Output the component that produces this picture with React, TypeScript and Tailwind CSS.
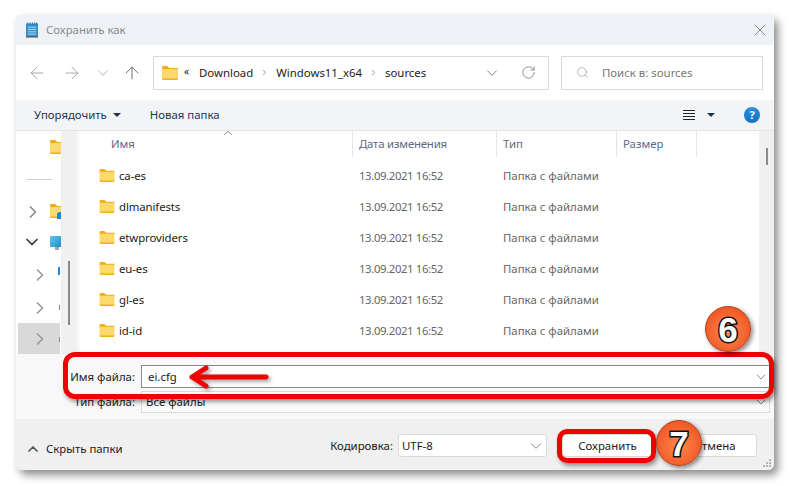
import { ArrowLeft, ArrowRight, ArrowUp, ChevronDown, ChevronRight, ChevronUp, RotateCw, Search, X } from 'lucide-react';

const rows = ['ca-es', 'dlmanifests', 'etwproviders', 'eu-es', 'gl-es', 'id-id'];

function Folder({ className = '' }: { className?: string }) {
  return (
    <svg viewBox="0 0 16 14" className={className}>
      <path d="M0 1.5C0 .7.6 0 1.4 0h3.4c.5 0 .8.2 1.1.5L7.2 2H16v2H0z" fill="#f0ae14" />
      <path d="M0 3h16v9.6c0 .8-.6 1.4-1.4 1.4H1.4C.6 14 0 13.4 0 12.6z" fill="#fbd96b" />
      <path d="M0 12.4h16v.3c0 .7-.6 1.3-1.4 1.3H1.4C.6 14 0 13.4 0 12.7z" fill="#eeb11f" />
    </svg>
  );
}

function Caret() {
  return <span className="block w-0 h-0 border-x-[4px] border-x-transparent border-t-[4px] border-t-[#1c3557]" />;
}

function Badge({ n, className }: { n: string; className: string }) {
  return (
    <div className={`absolute w-[46px] h-[46px] rounded-full border border-[#a8401c] flex items-center justify-center bg-[radial-gradient(circle_at_50%_55%,#ff8a50,#f4602c_60%,#e0481a)] shadow-[2px_2px_4px_rgba(0,0,0,0.45)] ${className}`}>
      <span className="font-['Liberation_Sans',sans-serif] font-bold text-[35px] leading-none text-white [-webkit-text-stroke:3px_#111] [paint-order:stroke_fill]">{n}</span>
    </div>
  );
}

export default function App() {
  return (
    <div className="relative w-[790px] h-[486px] bg-white overflow-hidden font-['Noto_Sans',sans-serif] text-[11.4px] text-[#1a1a1a] p-[15px_16px_16px_16px]">
      <div className="w-[758px] h-[455px] rounded-t-[4px] rounded-b-[6px] bg-white flex flex-col overflow-hidden shadow-[4px_5px_9px_rgba(0,0,0,0.45)]">
        {/* title */}
        <div className="h-[30px] shrink-0 bg-[#eef2f6] flex items-center pl-[10px] pr-[4px]">
          <svg viewBox="0 0 13 16" className="w-[12px] h-[16px] mr-[8px]">
            <rect x="0" y="1" width="13" height="15" fill="#2f8fcf" />
            <rect x="0" y="15" width="13" height="1" fill="#8a4b20" />
            <path d="M2 0v2M4.500 0v2M7 0v2M9.500 0v2M11.500 0v2" stroke="#1c6aa5" />
            <path d="M2 5h9M2 7.500h9M2 10h9M2 12.500h9" stroke="#bfe3f7" />
          </svg>
          <span className="text-[#8a8a8a]">Сохранить как</span>
          <X className="ml-auto w-[20px] h-[20px] text-[#8c8c8c]" strokeWidth={1.2} />
        </div>

        {/* address */}
        <div className="h-[55px] shrink-0 bg-white flex items-center pl-[11px]">
          <ArrowLeft className="w-[20px] h-[20px] text-[#a8a8a8]" strokeWidth={1.2} />
          <ArrowRight className="w-[20px] h-[20px] text-[#a8a8a8] ml-[15px]" strokeWidth={1.2} />
          <ChevronDown className="w-[18px] h-[18px] text-[#a8a8a8] ml-[12px]" strokeWidth={1.2} />
          <ArrowUp className="w-[20px] h-[20px] text-[#707070] ml-[10px]" strokeWidth={1.2} />
          <div className="ml-[11px] w-[396px] h-[34px] border border-[#d9d9d9] flex items-center pl-[8px] pr-[12px]">
            <Folder className="w-[16px] h-[14px] shrink-0" />
            <span className="ml-[6px] w-[8px] text-[10px] leading-none mb-[3px]">«</span>
            <span className="ml-[7px]">Download</span>
            <ChevronRight className="w-[9px] h-[9px] text-[#777] mx-[7px]" strokeWidth={2} />
            <span>Windows11_x64</span>
            <ChevronRight className="w-[9px] h-[9px] text-[#777] mx-[7px]" strokeWidth={2} />
            <span>sources</span>
            <ChevronDown className="ml-auto w-[18px] h-[18px] text-[#777]" strokeWidth={1.2} />
            <RotateCw className="ml-[20px] w-[15px] h-[15px] text-[#777]" strokeWidth={1.3} />
          </div>
          <div className="ml-[12px] w-[202px] h-[34px] border border-[#d9d9d9] flex items-center pl-[14px] text-[#767676]">
            <Search className="w-[13px] h-[13px] text-[#999]" strokeWidth={1.3} />
            <span className="ml-[13px]">Поиск в: sources</span>
          </div>
        </div>

        {/* toolbar */}
        <div className="h-[31px] shrink-0 bg-[#f3f4f6] border-b border-[#e3e3e3] flex items-center pl-[18px] pr-[14px] text-[#1c3557]">
          <span>Упорядочить</span>
          <span className="ml-[6px]"><Caret /></span>
          <span className="ml-[29px]">Новая папка</span>
          <div className="ml-auto w-[12px] flex flex-col gap-[2px]">
            <span className="h-px bg-[#222]" />
            <span className="h-px bg-[#222]" />
            <span className="h-px bg-[#222]" />
            <span className="h-px bg-[#222]" />
          </div>
          <span className="ml-[12px]"><Caret /></span>
          <span className="ml-[29px] w-[16px] h-[16px] rounded-full bg-[linear-gradient(#2a90e0,#1270c0)] text-white text-[11px] font-bold flex items-center justify-center">?</span>
        </div>

        {/* browser */}
        <div className="h-[223px] shrink-0 flex bg-[#f8f8f8]">
          <div className="w-[45px] shrink-0 bg-white relative overflow-hidden">
            <Folder className="absolute left-[34px] top-[9px] w-[16px] h-[14px]" />
            <div className="absolute left-[10px] top-[48px] w-[26px] h-px bg-[#d0d0d0]" />
            <ChevronRight className="absolute left-[7px] top-[71px] w-[20px] h-[20px] text-[#8a8a8a]" strokeWidth={2} />
            <Folder className="absolute left-[34px] top-[73px] w-[16px] h-[14px]" />
            <div className="absolute left-[41px] top-[81px] w-[4px] h-[7px] rounded-tl-[3px] bg-[#1a86d8]" />
            <ChevronDown className="absolute left-[6px] top-[101px] w-[20px] h-[20px] text-[#333]" strokeWidth={2} />
            <div className="absolute left-[34px] top-[105px] w-[14px] h-[11px] bg-[linear-gradient(135deg,#5cc8ee,#1a86c8)]" />
            <div className="absolute left-[39px] top-[116px] w-[4px] h-[3px] bg-[#9aa8b0]" />
            <ChevronRight className="absolute left-[14px] top-[134px] w-[20px] h-[20px] text-[#9a9a9a]" strokeWidth={2} />
            <div className="absolute left-[42px] top-[136px] w-[2px] h-[8px] bg-[#2b88d8]" />
            <ChevronRight className="absolute left-[14px] top-[167px] w-[20px] h-[20px] text-[#9a9a9a]" strokeWidth={2} />
            <div className="absolute left-[43px] top-[174px] w-px h-[5px] bg-[#888]" />
            <div className="absolute left-[2px] top-[192px] w-[42px] h-[31px] bg-[#d9d9d9]" />
            <ChevronRight className="absolute left-[14px] top-[198px] w-[20px] h-[20px] text-[#9a9a9a]" strokeWidth={2} />
            <div className="absolute left-[43px] top-[206px] w-px h-[5px] bg-[#888]" />
          </div>
          <div className="w-[16px] shrink-0 bg-[#f0f0f0] relative">
            <div className="absolute left-[7px] top-[130px] w-[2px] h-[64px] bg-[#8a8a8a]" />
          </div>
          <div className="w-[3px] shrink-0 bg-[#f8f8f8]" />
          <div className="flex-1 bg-white">
            <div className="h-[26px] flex items-center text-[#5a6a80]">
              <div className="w-[273px] h-full pl-[31px] flex items-center border-r border-[#e5e5e5] relative">
                Имя
                <ChevronUp className="absolute left-[141px] -top-[5px] w-[14px] h-[14px] text-[#777]" strokeWidth={1.5} />
              </div>
              <div className="w-[144px] h-full pl-[6px] flex items-center border-r border-[#e5e5e5] tracking-[-0.2px]">Дата изменения</div>
              <div className="w-[120px] h-full pl-[6px] flex items-center border-r border-[#e5e5e5]">Тип</div>
              <div className="w-[80px] h-full pl-[6px] flex items-center border-r border-[#e5e5e5]">Размер</div>
            </div>
            <div className="pt-[3px]">
              {rows.map((r) => (
                <div key={r} className="h-[31px] flex items-center">
                  <div className="w-[273px] pl-[19px] flex items-center">
                    <Folder className="w-[16px] h-[13px]" />
                    <span className="ml-[4px] tracking-[-0.1px]">{r}</span>
                  </div>
                  <div className="w-[144px] pl-[6px] text-[#666] tracking-[-0.4px]">13.09.2021 16:52</div>
                  <div className="pl-[6px] text-[#666]">Папка с файлами</div>
                </div>
              ))}
            </div>
          </div>
          <div className="w-[15px] shrink-0 bg-[#f0f0f0] relative">
            <div className="absolute left-[7px] top-[17px] w-[2px] h-[17px] bg-[#8a8a8a]" />
          </div>
        </div>

        {/* file fields */}
        <div className="flex-1 bg-[#f8f8f8] flex flex-col pt-[11px] pr-[4px] gap-[3px]">
          <div className="flex items-center">
            <span className="w-[125px] text-right pr-[6px]">Имя файла:</span>
            <div className="flex-1 h-[23px] bg-white border border-[#8a8a8a] flex items-center pl-[6px]">
              ei.cfg
              <ChevronDown className="ml-auto w-[16px] h-[16px] text-[#777]" strokeWidth={1.3} />
            </div>
          </div>
          <div className="flex items-center">
            <span className="w-[125px] text-right pr-[6px]">Тип файла:</span>
            <div className="flex-1 h-[22px] bg-[#fbfbfb] border border-[#d9d9d9] flex items-center pl-[4px]">
              Все файлы
              <ChevronDown className="ml-auto w-[16px] h-[16px] text-[#777]" strokeWidth={1.3} />
            </div>
          </div>
        </div>

        {/* footer */}
        <div className="h-[51px] shrink-0 bg-[#f0f0f0] flex items-center pl-[9px] pr-[17px] relative">
          <ChevronUp className="w-[16px] h-[16px] text-[#555] mt-[9px]" strokeWidth={2.6} />
          <span className="ml-[5px] mt-[9px]">Скрыть папки</span>
          <span className="ml-auto mt-[2px]">Кодировка:</span>
          <div className="ml-[5px] w-[149px] h-[23px] mt-[2px] bg-white border border-[#d9d9d9] rounded-[3px] flex items-center pl-[3px] pr-[1px]">
            UTF-8
            <ChevronDown className="ml-auto w-[18px] h-[18px] text-[#777]" strokeWidth={1.2} />
          </div>
          <div className="ml-[15px] w-[91px] h-[23px] mt-[2px] bg-white border border-[#d9d9d9] rounded-[3px] flex items-center justify-center">Сохранить</div>
          <div className="ml-[19px] w-[85px] h-[23px] mt-[2px] bg-white border border-[#d9d9d9] rounded-[3px] flex items-center justify-center">Отмена</div>
          <svg viewBox="0 0 9 9" className="absolute right-[2px] bottom-[2px] w-[9px] h-[9px]" fill="#b5b5b5">
            <rect x="6" y="0" width="2" height="2" />
            <rect x="3" y="3" width="2" height="2" />
            <rect x="6" y="3" width="2" height="2" />
            <rect x="0" y="6" width="2" height="2" />
            <rect x="3" y="6" width="2" height="2" />
            <rect x="6" y="6" width="2" height="2" />
          </svg>
        </div>
      </div>

      {/* annotations */}
      <div className="absolute left-[63px] top-[352px] w-[711px] h-[47px] rounded-[12px] border-[5px] border-[#f00000] shadow-[2px_3px_4px_rgba(0,0,0,0.4)]" />
      <div className="absolute left-[557px] top-[429px] w-[99px] h-[34px] rounded-[10px] border-[5px] border-[#f00000] shadow-[2px_3px_4px_rgba(0,0,0,0.4)]" />
      <svg className="absolute left-[185px] top-[362px] w-[88px] h-[30px] drop-shadow-[2px_2px_2px_rgba(0,0,0,0.4)]" viewBox="0 0 88 30">
        <path d="M81 15H7M21 6 7 15l14 9" fill="none" stroke="#f00000" strokeWidth="5" strokeLinecap="round" strokeLinejoin="round" />
      </svg>
      <Badge n="6" className="left-[705px] top-[306px]" />
      <Badge n="7" className="left-[656px] top-[420px]" />
    </div>
  );
}
